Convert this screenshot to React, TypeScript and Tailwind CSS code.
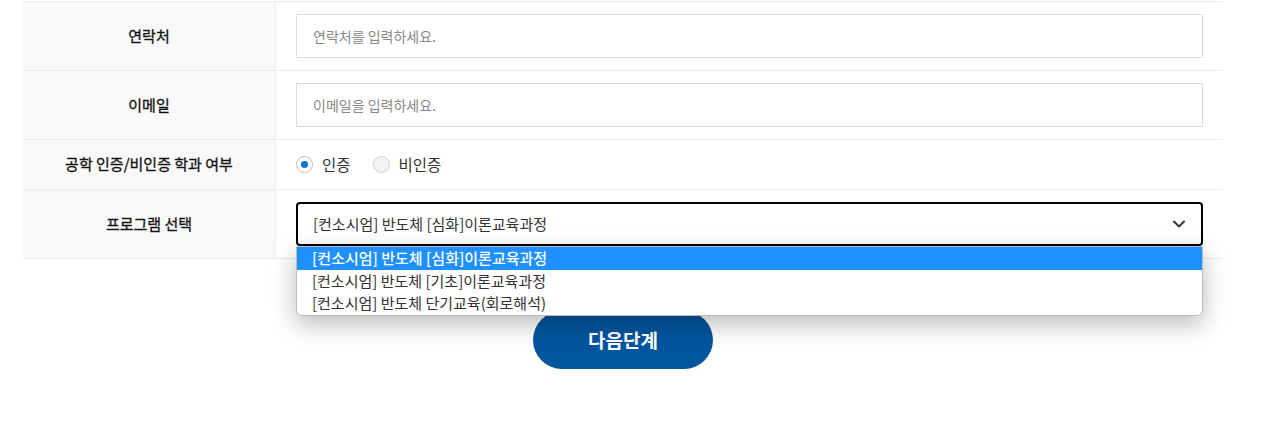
import { ChevronDown } from "lucide-react";

const font = { fontFamily: '"Noto Sans CJK KR", "Noto Sans", sans-serif' };

const options = [
  "[컨소시엄] 반도체 [심화]이론교육과정",
  "[컨소시엄] 반도체 [기초]이론교육과정",
  "[컨소시엄] 반도체 단기교육(회로해석)",
];

function Row({ label, h, children }: { label: string; h: string; children: React.ReactNode }) {
  return (
    <div className={`flex border-b border-[#ebebeb] ${h}`}>
      <div className="w-[253px] shrink-0 bg-[#f9f9f9] border-r border-[#ebebeb] flex items-center justify-center text-[15px] font-normal text-[#111] [-webkit-text-stroke:0.3px_#111]">
        {label}
      </div>
      <div className="flex-1 flex items-center pl-5 pr-5">{children}</div>
    </div>
  );
}

export default function App() {
  return (
    <div className="w-[1268px] h-[438px] bg-white overflow-hidden" style={font}>
      <div className="mx-[23px] mt-px border-t border-[#ebebeb] w-[1200px]">
        <Row label="연락처" h="h-[69px]">
          <input
            className="w-full h-[44px] border border-[#dcdcdc] px-4 text-[14px] placeholder:text-[#888] outline-none"
            placeholder="연락처를 입력하세요."
          />
        </Row>
        <Row label="이메일" h="h-[69px]">
          <input
            className="w-full h-[44px] border border-[#dcdcdc] px-4 text-[14px] placeholder:text-[#888] outline-none"
            placeholder="이메일을 입력하세요."
          />
        </Row>
        <Row label="공학 인증/비인증 학과 여부" h="h-[50px]">
          <div className="flex items-center text-[15.5px] text-[#333]">
            <span className="w-[17px] h-[17px] rounded-full border border-[#bdbdbd] bg-white flex items-center justify-center">
              <span className="w-[7px] h-[7px] rounded-full bg-[#0074d9]" />
            </span>
            <span className="ml-[9px]">인증</span>
            <span className="ml-[22px] w-[17px] h-[17px] rounded-full border border-[#cfcfcf] bg-[#f3f3f3]" />
            <span className="ml-[9px]">비인증</span>
          </div>
        </Row>
        <Row label="프로그램 선택" h="h-[69px]">
          <div className="relative w-full">
            <div className="h-[44px] w-full border-2 border-black rounded-[4px] flex items-center justify-between pl-[15px] pr-[12px] text-[15px] text-[#333]">
              <span>{options[0]}</span>
              <ChevronDown size={20} strokeWidth={2.4} className="text-[#333]" />
            </div>
            <div className="absolute left-0 right-0 top-[44px] z-10 bg-white border border-[#bcbcbc] rounded-b-[6px] overflow-hidden shadow-[0_8px_24px_rgba(0,0,0,0.28)] text-[15px]">
              {options.map((o, i) => (
                <div
                  key={o}
                  className={`h-[22.5px] leading-[22px] pl-[15px] ${
                    i === 0 ? "bg-[#1e90ff] text-white font-medium" : "text-[#333]"
                  }`}
                >
                  {o}
                </div>
              ))}
            </div>
          </div>
        </Row>
      </div>
      <div className="flex justify-center mt-[52px] w-[1246px]">
        <button className="w-[180px] h-[58px] rounded-full bg-[#00559f] text-white text-[19px] font-bold">
          다음단계
        </button>
      </div>
    </div>
  );
}
